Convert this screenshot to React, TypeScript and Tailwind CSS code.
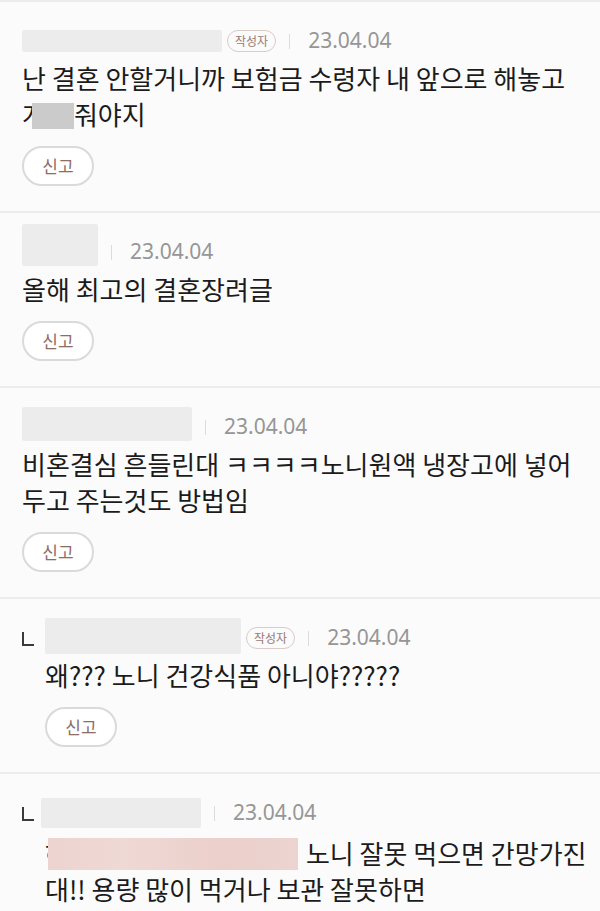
import React from "react";

type Comment = {
  reply?: boolean;
  nameW: number;
  nameH: number;
  nameShift?: string;
  author?: boolean;
  body: React.ReactNode;
  report?: boolean;
};

function ReportButton() {
  return (
    <button className="mt-[14px] flex h-[40px] w-[72px] items-center justify-center rounded-full border-2 border-[#dadada] bg-white text-[17px] text-[#8d6d65]">
      신고
    </button>
  );
}

function CommentItem({ c }: { c: Comment }) {
  return (
    <div className="border-b-2 border-[#ececec] pb-[25px] pt-[24px] pl-[22px] pr-[8px]">
      <div className="flex">
        {c.reply && (
          <div className="w-[23px] shrink-0 pt-[9px]">
            {/* reply marker */}
            <div className="h-[14px] w-[12px] border-b-2 border-l-2 border-[#3a3a3a]" />
          </div>
        )}
        <div className="flex-1">
          <div className="flex h-[30px] items-center">
            <div
              className={"rounded-[2px] bg-[#ececec] blur-[0.6px] " + (c.nameShift ?? "")}
              style={{ width: c.nameW, height: c.nameH }}
            />
            {c.author && (
              <span className="ml-[5px] flex h-[22px] items-center rounded-full border border-[#d9cbc7] px-[7px] text-[12px] text-[#9a7a72]">
                작성자
              </span>
            )}
            <span className="ml-[13px] h-[15px] w-px bg-[#dcdcdc]" />
            <span className="ml-[18px] font-['Noto_Sans',sans-serif] text-[21px] text-[#969696]">23.04.04</span>
          </div>
          <div className="mt-[4px] whitespace-nowrap text-[26px] leading-[36px] text-[#1b1b1b]">{c.body}</div>
          {c.report !== false && <ReportButton />}
        </div>
      </div>
    </div>
  );
}

const comments: Comment[] = [
  {
    nameW: 200,
    nameH: 22,
    author: true,
    body: (
      <>
        난 결혼 안할거니까 보험금 수령자 내 앞으로 해놓고
        <br />
        개<span className="-ml-[14px] inline-block h-[26px] w-[42px] translate-y-[4px] bg-[#cbcbcb] blur-[0.6px]" />
        줘야지
      </>
    ),
  },
  {
    nameW: 76,
    nameH: 42,
    nameShift: "-mt-[14px]",
    body: "올해 최고의 결혼장려글",
  },
  {
    nameW: 170,
    nameH: 34,
    nameShift: "-mt-[6px]",
    body: (
      <>
        비혼결심 흔들린대 ㅋㅋㅋㅋ노니원액 냉장고에 넣어
        <br />
        두고 주는것도 방법임
      </>
    ),
  },
  {
    reply: true,
    nameW: 196,
    nameH: 36,
    nameShift: "-mt-[4px]",
    author: true,
    body: "왜??? 노니 건강식품 아니야?????",
  },
  {
    reply: true,
    nameW: 160,
    nameH: 30,
    nameShift: "-ml-[4px]",
    report: false,
    body: (
      <>
        하<span className="-ml-[21px] mr-[8px] inline-block h-[32px] w-[250px] translate-y-[6px] bg-[linear-gradient(90deg,#ecd3cf,#efd9d5_30%,#ebcfca_70%,#ecd4d0)] blur-[0.6px]" />
        노니 잘못 먹으면 간망가진
        <br />
        대!! 용량 많이 먹거나 보관 잘못하면
      </>
    ),
  },
];

export default function App() {
  return (
    <div className="h-[911px] w-[600px] overflow-hidden bg-[#fbfbfb] font-['Noto_Sans_CJK_KR','Noto_Sans',sans-serif]">
      <div className="h-[2px] bg-[#ececec]" />
      {comments.map((c, i) => (
        <CommentItem key={i} c={c} />
      ))}
    </div>
  );
}
